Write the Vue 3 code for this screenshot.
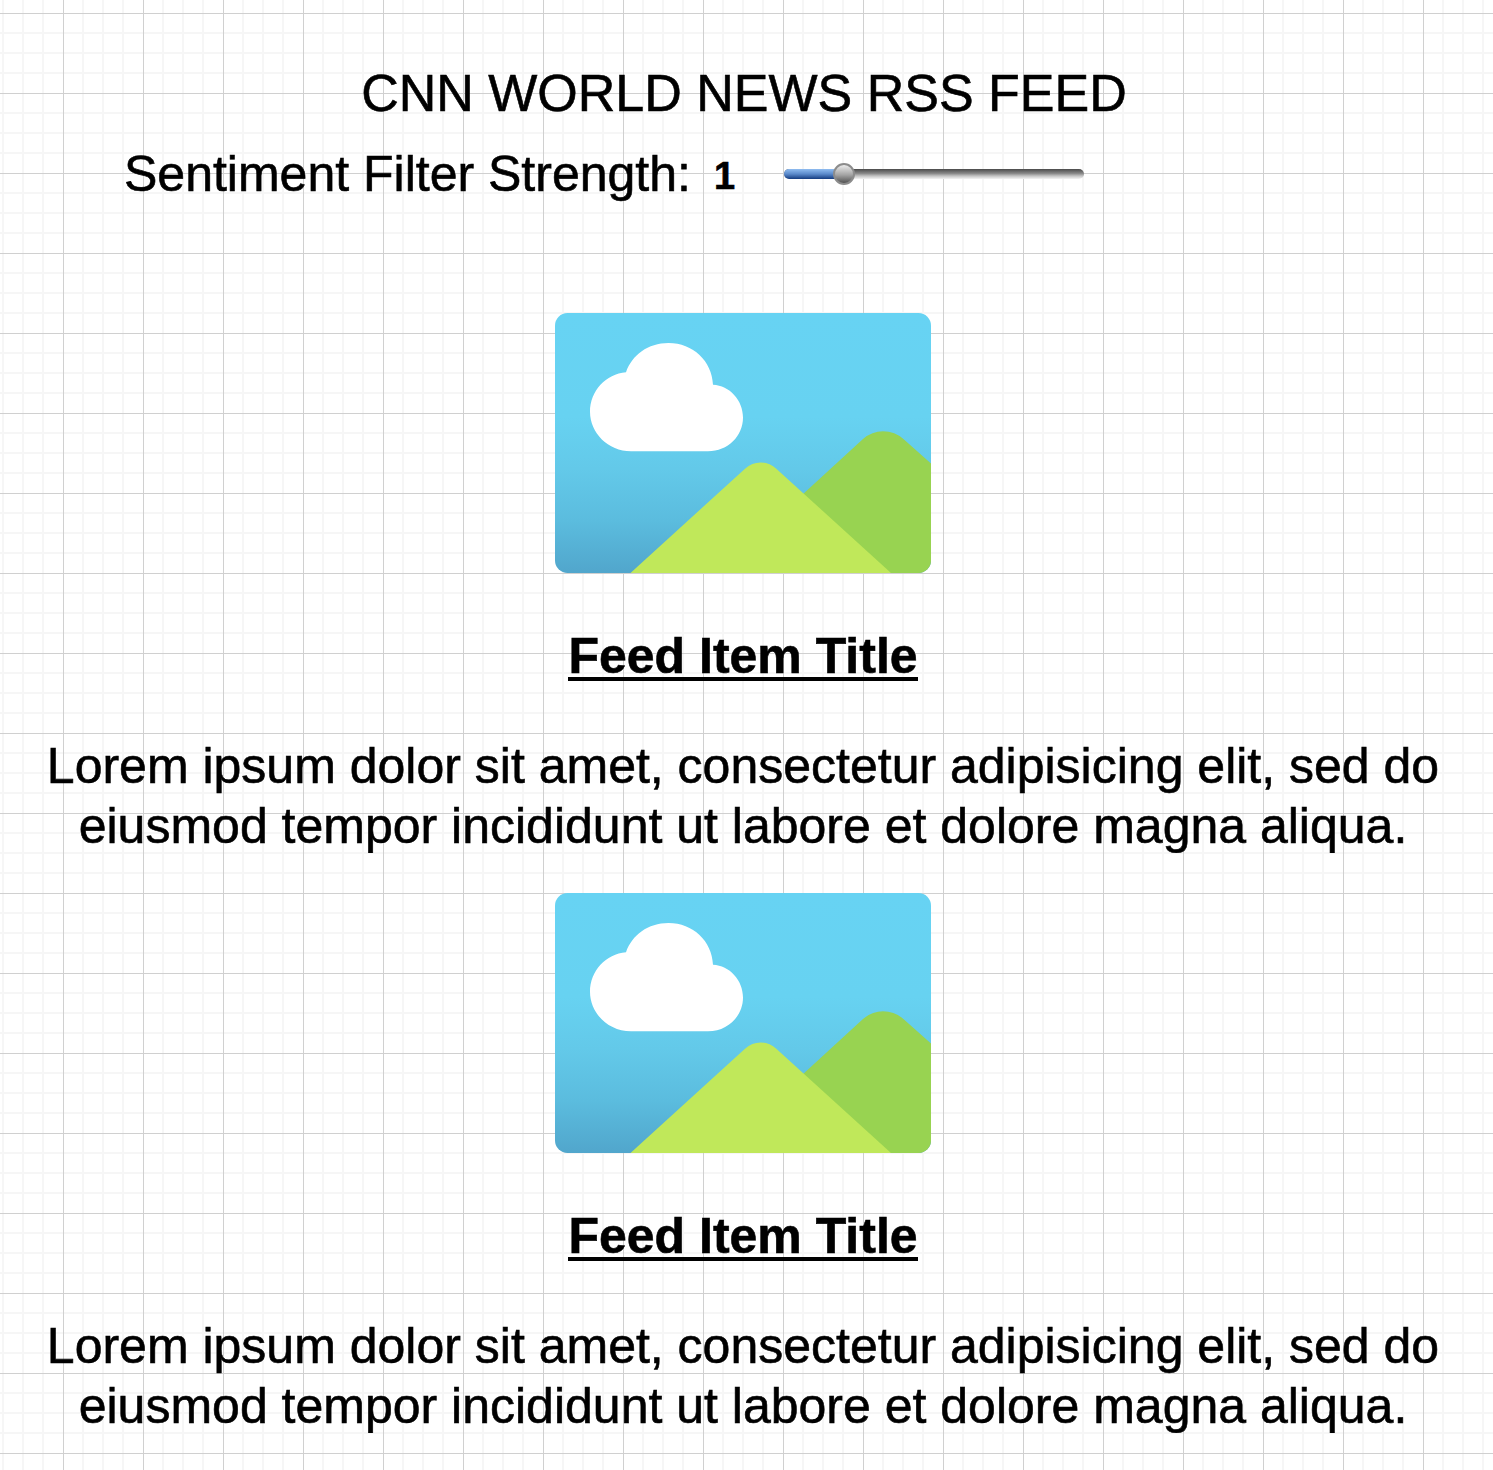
<script setup>
import { ref } from 'vue'

const strength = ref(1)
const maxStrength = 5
const items = [1, 2].map((id) => ({
  id,
  title: 'Feed Item Title',
  lines: [
    'Lorem ipsum dolor sit amet, consectetur adipisicing elit, sed do',
    'eiusmod tempor incididunt ut labore et dolore magna aliqua.',
  ],
}))
</script>

<template>
  <main class="canvas">
    <h1 class="heading"><span>CNN WORLD NEWS RSS FEED</span></h1>

    <div class="filter">
      <span class="label">Sentiment Filter Strength:</span>
      <span class="value">{{ strength }}</span>
      <div class="slider">
        <div class="fill" :style="{ width: (strength / maxStrength) * 100 + '%' }"></div>
        <div class="thumb" :style="{ left: (strength / maxStrength) * 100 + '%' }"></div>
      </div>
    </div>

    <article v-for="item in items" :key="item.id" class="item">
      <svg class="picture" width="376" height="260" viewBox="0 0 376 260">
        <defs>
          <linearGradient :id="'sky' + item.id" x1="0" y1="0" x2="0" y2="1">
            <stop offset="0" stop-color="#67d3f3" />
            <stop offset="0.4" stop-color="#67d2f1" />
            <stop offset="0.6" stop-color="#63c9e9" />
            <stop offset="0.8" stop-color="#5bbcde" />
            <stop offset="1" stop-color="#51a6cc" />
          </linearGradient>
          <clipPath :id="'frame' + item.id"><rect width="376" height="260" rx="12.5" /></clipPath>
        </defs>
        <g :clip-path="`url(#frame${item.id})`">
          <rect width="376" height="260" :fill="`url(#sky${item.id})`" />
          <path
            fill="#fff"
            d="M76 138.3C53 138.3 35 120 35 98.8C35 78 51 61 71 59.3C77 42 93 30 113.5 30C138 30 157 48 158 71.7C174.5 72.5 188 87 188 104.5C188 123 173 138.3 153 138.3Z"
          />
          <path fill="#98d351" d="M162 260L308 126Q317 118.3 328 118.3Q340 118.3 348.7 126.3L376 150.5V260Z" />
          <path fill="#c0e85a" d="M75.5 260L190 155.7Q197 149.5 205.5 149.5Q214.500 149.500 221.3 155.7L336 260Z" />
        </g>
      </svg>
      <h2 class="title"><span>{{ item.title }}</span></h2>
      <p class="text">
        <span v-for="(line, i) in item.lines" :key="i">{{ line }}</span>
      </p>
    </article>
  </main>
</template>

<style>
body {
  margin: 0;
  overflow: hidden;
}
</style>

<style scoped>
.canvas {
  box-sizing: border-box;
  width: 1493px;
  height: 1470px;
  padding-top: 63px;
  overflow: hidden;
  color: #000;
  font-family: 'Liberation Sans', Arial, Helvetica, sans-serif;
  -webkit-text-stroke: 0.6px #000;
  background-color: #fff;
  background-image:
    linear-gradient(90deg, #d0d0d0 1px, transparent 1px),
    linear-gradient(#d0d0d0 1px, transparent 1px),
    linear-gradient(90deg, transparent 19px, #f6f6f6 19px 21px, transparent 21px 39px, #f6f6f6 39px 41px, transparent 41px 59px, #f6f6f6 59px 61px, transparent 61px),
    linear-gradient(transparent 19px, #f6f6f6 19px 21px, transparent 21px 39px, #f6f6f6 39px 41px, transparent 41px 59px, #f6f6f6 59px 61px, transparent 61px);
  background-size: 80px 80px;
  background-position: 63px 13px;
}

.heading {
  margin: 0;
  width: 1488px;
  height: 60px;
  line-height: 60px;
  font-size: 52px;
  font-weight: 400;
  text-align: center;
  white-space: nowrap;
}

.filter {
  display: flex;
  align-items: center;
  height: 60px;
  margin-top: 21px;
  padding-left: 124px;
}

.label {
  width: 590px;
  font-size: 50px;
  line-height: 60px;
  white-space: nowrap;
}

.value {
  width: 70px;
  padding-top: 4px;
  font-size: 38px;
  line-height: 56px;
  font-weight: 700;
}

.slider {
  position: relative;
  width: 300px;
  height: 10px;
  border-radius: 5px;
  background: linear-gradient(#4a4a4a, #8a8a8a 45%, #c4c4c4 70%, #f4f4f4);
}

.fill {
  height: 10px;
  border-radius: 5px 0 0 5px;
  background: linear-gradient(#8fbcf0, #5b8acb 50%, #143c80);
}

.thumb {
  position: absolute;
  top: -6px;
  box-sizing: border-box;
  width: 22px;
  height: 22px;
  margin-left: -11px;
  border: 2px solid #8c8c8c;
  border-radius: 50%;
  background: linear-gradient(#ececec, #a4a4a4 55%, #525252);
}

.item {
  display: flex;
  flex-direction: column;
  align-items: center;
  width: 1486px;
  height: 580px;
}

.filter + .item {
  margin-top: 109px;
}

.picture {
  display: block;
  flex: none;
}

.title {
  margin: 53px 0 0;
  height: 55px;
  font-size: 50px;
  line-height: 60px;
  font-weight: 700;
  white-space: nowrap;
}

.title span {
  display: block;
  height: 51px;
  border-bottom: 4px solid #000;
}

.text {
  display: flex;
  flex-direction: column;
  align-items: center;
  height: 117px;
  margin: 55px 0 0;
  overflow: hidden;
  font-size: 50px;
  line-height: 60px;
  white-space: nowrap;
}
</style>
